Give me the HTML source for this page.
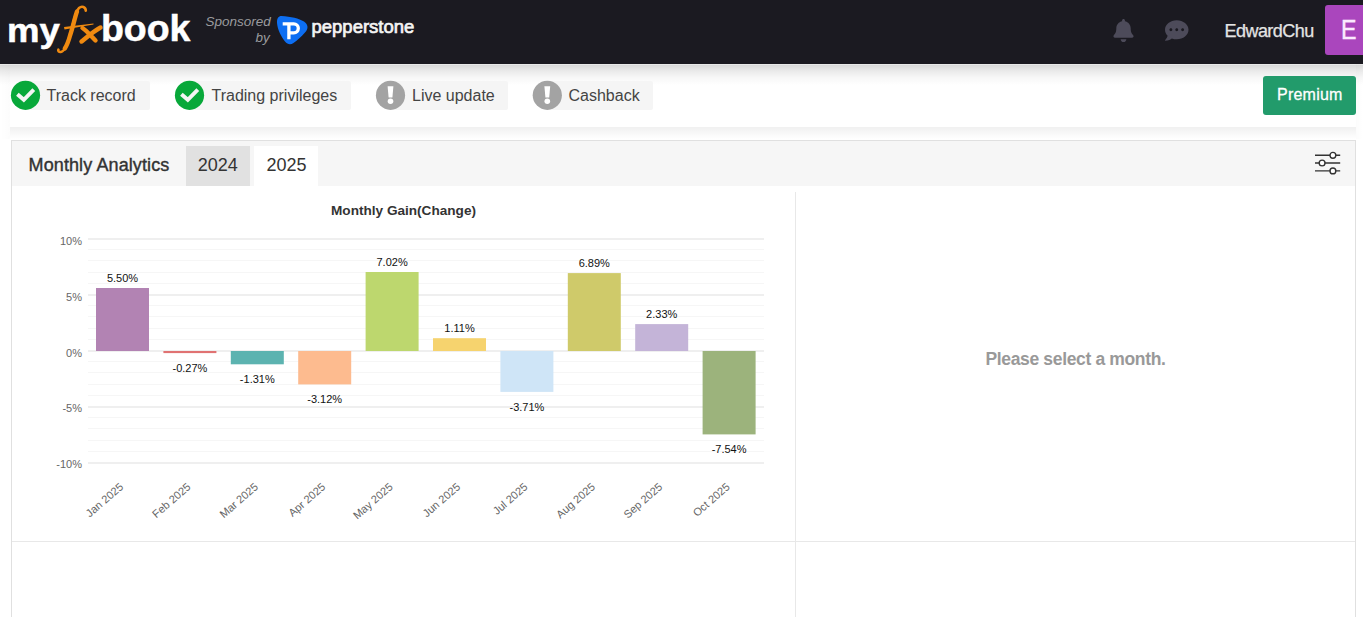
<!DOCTYPE html>
<html><head><meta charset="utf-8">
<style>
*{margin:0;padding:0;box-sizing:border-box}
html,body{width:1363px;height:617px;overflow:hidden;background:#fff;font-family:"Liberation Sans",sans-serif}
.a{position:absolute;white-space:nowrap;line-height:1}
#hdr{position:absolute;left:0;top:0;width:1363px;height:64px;background:#1b1a21}
#hshadow{position:absolute;left:0;top:64px;width:1363px;height:21px;background:linear-gradient(rgba(0,0,0,.05),rgba(0,0,0,.15) 6%,rgba(0,0,0,.08) 35%,rgba(0,0,0,.03) 65%,rgba(0,0,0,0))}
#card{position:absolute;left:10px;top:64px;width:1346px;height:63px;background:#fff}
#cshadow{position:absolute;left:10px;top:127px;width:1346px;height:12px;background:linear-gradient(rgba(0,0,0,.06),rgba(0,0,0,0))}
.chipbg{position:absolute;top:81px;height:29px;background:#f5f5f5;border-radius:2px}
.chiptxt{position:absolute;top:88.2px;font-size:16px;color:#444;line-height:1;white-space:nowrap}
#panel{position:absolute;left:11px;top:140px;width:1345px;height:500px;border:1px solid #e0e0e0;background:#fff}
#phead{position:absolute;left:12px;top:141px;width:1343px;height:45px;background:#f6f6f6}
</style></head><body>
<div id="hdr"></div>

<!-- logo -->
<div class="a" style="left:7.3px;top:13px;font-size:34px;font-weight:bold;color:#fff;transform:scaleX(1.075);transform-origin:0 0;-webkit-text-stroke:0.5px #fff">my</div>
<svg class="a" style="left:0;top:0" width="200" height="64">
  <path d="M85.8 10.6 C 85.6 6.8, 81.8 5.6, 79 8 C 75.6 11, 73.6 22, 70.2 34.5 C 67.8 43.5, 64.8 51.5, 60.8 52 C 58.8 52.2, 57.8 51, 58.4 49.6" stroke="#f08a10" stroke-width="2.6" fill="none" stroke-linecap="round"/>
  <path d="M77 11.5 C 75 17, 73.4 25, 70.2 35 C 68.7 40.5, 67.2 45, 64.8 48.5" stroke="#f08a10" stroke-width="4.4" fill="none" stroke-linecap="round"/>
  <path d="M64 27 L93.5 23.4 L93.5 24.4 L64.5 29.4 Z" fill="#f08a10"/>
  <path d="M82.5 28 C 87 31, 91 36, 95.5 40.5 M100.5 27.5 C 94 31, 87 37, 81.5 41.5" stroke="#f08a10" stroke-width="4.4" fill="none" stroke-linecap="round"/>
</svg>
<div class="a" style="left:100.8px;top:11.2px;font-size:36px;font-weight:bold;color:#fff;transform:scaleX(1.04);transform-origin:0 0;-webkit-text-stroke:0.5px #fff">book</div>

<div class="a" style="left:205.5px;top:14.8px;font-size:13.5px;font-style:italic;color:#9a9a9e">Sponsored</div>
<div class="a" style="left:255.5px;top:31px;font-size:13.5px;font-style:italic;color:#9a9a9e">by</div>
<svg class="a" style="left:0;top:0" width="1363" height="64">
  <path d="M281.5 16 C 291 16.5, 299 18.5, 304 21.5 C 308.5 24.5, 308.5 29, 305 32.5 C 301 37, 297 40.5, 293.5 43 C 290.5 45, 287.5 44.5, 285 41.5 C 281.5 37, 277.5 30, 277 23 C 276.7 18.5, 278.5 16, 281.5 16 Z" fill="#0d6ef2"/>
  <path d="M282.7 23.8 H293.8 a4.5 4.5 0 0 1 0 9 H288.9 M288.9 23.8 V39.3" stroke="#fff" stroke-width="3.3" fill="none"/>
</svg>
<div class="a" style="left:311.5px;top:18.2px;font-size:18.5px;color:#f4f4f4;-webkit-text-stroke:0.7px #f4f4f4">pepperstone</div>

<!-- right header -->
<svg class="a" style="left:1113px;top:19px" width="21" height="23" viewBox="0 0 448 512"><path fill="#4d4b5a" d="M224 512c35.32 0 63.97-28.65 63.97-64H160.03c0 35.35 28.65 64 63.97 64zm215.39-149.71c-19.32-20.76-55.47-51.99-55.470-154.29 0-77.7-54.48-139.9-127.94-155.16V32c0-17.67-14.32-32-31.98-32s-31.98 14.33-31.98 32v20.84C118.56 68.1 64.08 130.3 64.08 208c0 102.3-36.15 133.53-55.47 154.29-6 6.450-8.66 14.16-8.61 21.71.11 16.4 12.98 32 32.1 32h383.8c19.12 0 32-15.6 32.1-32 .05-7.55-2.61-15.27-8.61-21.71z"/></svg>
<svg class="a" style="left:1165px;top:19.5px" width="23.5" height="21" viewBox="0 32 512 448"><path fill="#4d4b5a" d="M256 32C114.6 32 0 125.1 0 240c0 49.6 21.4 95 57 130.7C44.5 421.1 2.7 466 2.2 466.5c-2.2 2.3-2.8 5.7-1.500 8.7S4.8 480 8 480c66.3 0 116-31.8 140.6-51.4 32.7 12.3 69 19.4 107.4 19.4 141.4 0 256-93.1 256-208S397.4 32 256 32zM128 272c-17.7 0-32-14.3-32-32s14.3-32 32-32 32 14.3 32 32-14.3 32-32 32zm128 0c-17.7 0-32-14.3-32-32s14.3-32 32-32 32 14.3 32 32-14.3 32-32 32zm128 0c-17.7 0-32-14.3-32-32s14.3-32 32-32 32 14.3 32 32-14.3 32-32 32z"/></svg>
<div class="a" style="left:1224.5px;top:21.5px;font-size:18px;color:#e4e4e4;letter-spacing:-0.54px;-webkit-text-stroke:0.25px #e4e4e4">EdwardChu</div>
<div class="a" style="left:1325px;top:5px;width:50px;height:50px;background:#aa46bd;border-radius:3px"></div>
<div class="a" style="left:1341.2px;top:16.6px;font-size:27px;color:#fbeaff;transform:scaleX(0.86);transform-origin:0 0;-webkit-text-stroke:0.4px #fbeaff">E</div>

<!-- status card -->
<div id="card"></div>
<div id="cshadow"></div>
<div class="a" style="left:0;top:64px;width:10px;height:75px;background:linear-gradient(to left,rgba(0,0,0,.012),rgba(0,0,0,0))"></div>
<div class="a" style="left:1356px;top:64px;width:7px;height:75px;background:linear-gradient(to right,rgba(0,0,0,.012),rgba(0,0,0,0))"></div>
<div id="hshadow"></div>

<div class="chipbg" style="left:25px;width:125px"></div>
<div class="chipbg" style="left:189px;width:162px"></div>
<div class="chipbg" style="left:390px;width:118px"></div>
<div class="chipbg" style="left:547px;width:106px"></div>

<svg class="a" style="left:0;top:0" width="700" height="130">
  <g fill="#08a83a"><circle cx="25.5" cy="95.3" r="14.6"/><circle cx="189.5" cy="95.3" r="14.6"/></g>
  <g stroke="#f4f4f4" stroke-width="3.9" fill="none" stroke-linejoin="miter">
    <path d="M17.4 94.2 L23.8 99.8 L33.8 89.6"/>
    <path d="M181.4 94.2 L187.8 99.8 L197.8 89.6"/>
  </g>
  <g fill="#a3a3a3"><circle cx="390.5" cy="95.3" r="14.6"/><circle cx="547.3" cy="95.3" r="14.6"/></g>
  <g fill="#fff">
    <path d="M387.6 86.2 H393.4 L392.4 97.4 H388.6 Z"/><circle cx="390.5" cy="101.2" r="2.8"/>
    <path d="M544.4 86.2 H550.2 L549.2 97.4 H545.4 Z"/><circle cx="547.3" cy="101.2" r="2.8"/>
  </g>
</svg>
<div class="chiptxt" style="left:46.5px">Track record</div>
<div class="chiptxt" style="left:211.5px">Trading privileges</div>
<div class="chiptxt" style="left:412px">Live update</div>
<div class="chiptxt" style="left:568.5px">Cashback</div>

<div class="a" style="left:1263px;top:76px;width:93px;height:39px;background:#229b6b;border-radius:3px"></div>
<div class="a" style="left:1277px;top:86.6px;font-size:16px;color:#fff;letter-spacing:0.24px;-webkit-text-stroke:0.3px #fff">Premium</div>

<!-- panel -->
<div id="panel"></div>
<div id="phead"></div>
<div class="a" style="left:28.6px;top:155.7px;font-size:18px;color:#333;letter-spacing:0.1px;-webkit-text-stroke:0.4px #333">Monthly Analytics</div>
<div class="a" style="left:186px;top:146px;width:64px;height:40px;background:#e1e1e1"></div>
<div class="a" style="left:254px;top:146px;width:64px;height:40px;background:#fff"></div>
<div class="a" style="left:197.8px;top:155.8px;font-size:18px;color:#333">2024</div>
<div class="a" style="left:266.4px;top:155.8px;font-size:18px;color:#333">2025</div>
<svg class="a" style="left:1305px;top:145px" width="45" height="37">
  <g stroke="#333" stroke-width="1.4" fill="none">
    <path d="M10 10.3 H25 M30.8 10.3 H35.2"/>
    <path d="M10 18 H14.2 M20 18 H35.2"/>
    <path d="M10 25.9 H25 M30.8 25.9 H35.2"/>
  </g>
  <g stroke="#333" stroke-width="1.4" fill="#fff">
    <circle cx="27.9" cy="10.3" r="2.9"/>
    <circle cx="17.1" cy="18" r="2.9"/>
    <circle cx="27.9" cy="25.9" r="2.9"/>
  </g>
</svg>

<!-- grid borders -->
<div class="a" style="left:795px;top:192px;width:1px;height:430px;background:#e8e8e8"></div>
<div class="a" style="left:12px;top:541px;width:1343px;height:1px;background:#e8e8e8"></div>

<div class="a" style="left:796px;top:350.8px;width:559px;text-align:center;font-size:17.5px;font-weight:bold;color:#999;letter-spacing:-0.35px">Please select a month.</div>

<!-- chart -->
<svg class="a" id="chart" style="left:0;top:0" width="800" height="617" font-family="Liberation Sans">
<rect x="88" y="462" width="676" height="2" fill="#efefef"/>
<rect x="88" y="451" width="676" height="1" fill="#f6f6f6"/>
<rect x="88" y="440" width="676" height="1" fill="#f6f6f6"/>
<rect x="88" y="428" width="676" height="1" fill="#f6f6f6"/>
<rect x="88" y="417" width="676" height="1" fill="#f6f6f6"/>
<rect x="88" y="406" width="676" height="2" fill="#efefef"/>
<rect x="88" y="395" width="676" height="1" fill="#f6f6f6"/>
<rect x="88" y="384" width="676" height="1" fill="#f6f6f6"/>
<rect x="88" y="372" width="676" height="1" fill="#f6f6f6"/>
<rect x="88" y="361" width="676" height="1" fill="#f6f6f6"/>
<rect x="88" y="350" width="676" height="2" fill="#efefef"/>
<rect x="88" y="339" width="676" height="1" fill="#f6f6f6"/>
<rect x="88" y="328" width="676" height="1" fill="#f6f6f6"/>
<rect x="88" y="316" width="676" height="1" fill="#f6f6f6"/>
<rect x="88" y="305" width="676" height="1" fill="#f6f6f6"/>
<rect x="88" y="294" width="676" height="2" fill="#efefef"/>
<rect x="88" y="283" width="676" height="1" fill="#f6f6f6"/>
<rect x="88" y="272" width="676" height="1" fill="#f6f6f6"/>
<rect x="88" y="260" width="676" height="1" fill="#f6f6f6"/>
<rect x="88" y="249" width="676" height="1" fill="#f6f6f6"/>
<rect x="88" y="238" width="676" height="2" fill="#efefef"/>
<text x="82" y="245.0" text-anchor="end" font-size="11" fill="#666">10%</text>
<text x="82" y="300.8" text-anchor="end" font-size="11" fill="#666">5%</text>
<text x="82" y="356.5" text-anchor="end" font-size="11" fill="#666">0%</text>
<text x="82" y="412.2" text-anchor="end" font-size="11" fill="#666">-5%</text>
<text x="82" y="468.0" text-anchor="end" font-size="11" fill="#666">-10%</text>
<rect x="96.0" y="288.0" width="53" height="63.0" fill="#b283b3"/>
<text x="122.5" y="281.5" text-anchor="middle" font-size="11" fill="#111">5.50%</text>
<text x="124.0" y="488" text-anchor="end" font-size="11" fill="#666" transform="rotate(-41 124.0 488)">Jan 2025</text>
<rect x="163.4" y="351.0" width="53" height="2.1" fill="#e07272"/>
<text x="189.9" y="371.7" text-anchor="middle" font-size="11" fill="#111">-0.27%</text>
<text x="191.4" y="488" text-anchor="end" font-size="11" fill="#666" transform="rotate(-41 191.4 488)">Feb 2025</text>
<rect x="230.8" y="351.0" width="53" height="13.3" fill="#5cb3b0"/>
<text x="257.3" y="382.9" text-anchor="middle" font-size="11" fill="#111">-1.31%</text>
<text x="258.8" y="488" text-anchor="end" font-size="11" fill="#666" transform="rotate(-41 258.8 488)">Mar 2025</text>
<rect x="298.2" y="351.0" width="53" height="33.4" fill="#fdbb8f"/>
<text x="324.7" y="403.0" text-anchor="middle" font-size="11" fill="#111">-3.12%</text>
<text x="326.2" y="488" text-anchor="end" font-size="11" fill="#666" transform="rotate(-41 326.2 488)">Apr 2025</text>
<rect x="365.6" y="272.0" width="53" height="79.0" fill="#bdd76e"/>
<text x="392.1" y="265.5" text-anchor="middle" font-size="11" fill="#111">7.02%</text>
<text x="393.6" y="488" text-anchor="end" font-size="11" fill="#666" transform="rotate(-41 393.6 488)">May 2025</text>
<rect x="433.0" y="338.2" width="53" height="12.8" fill="#f6d36e"/>
<text x="459.5" y="331.7" text-anchor="middle" font-size="11" fill="#111">1.11%</text>
<text x="461.0" y="488" text-anchor="end" font-size="11" fill="#666" transform="rotate(-41 461.0 488)">Jun 2025</text>
<rect x="500.4" y="351.0" width="53" height="40.9" fill="#cfe5f7"/>
<text x="526.9" y="410.5" text-anchor="middle" font-size="11" fill="#111">-3.71%</text>
<text x="528.4" y="488" text-anchor="end" font-size="11" fill="#666" transform="rotate(-41 528.4 488)">Jul 2025</text>
<rect x="567.8" y="273.1" width="53" height="77.9" fill="#cfca6a"/>
<text x="594.3" y="266.6" text-anchor="middle" font-size="11" fill="#111">6.89%</text>
<text x="595.8" y="488" text-anchor="end" font-size="11" fill="#666" transform="rotate(-41 595.8 488)">Aug 2025</text>
<rect x="635.2" y="324.1" width="53" height="26.9" fill="#c4b4d8"/>
<text x="661.7" y="317.6" text-anchor="middle" font-size="11" fill="#111">2.33%</text>
<text x="663.2" y="488" text-anchor="end" font-size="11" fill="#666" transform="rotate(-41 663.2 488)">Sep 2025</text>
<rect x="702.6" y="351.0" width="53" height="83.4" fill="#9cb37c"/>
<text x="729.1" y="453.0" text-anchor="middle" font-size="11" fill="#111">-7.54%</text>
<text x="730.6" y="488" text-anchor="end" font-size="11" fill="#666" transform="rotate(-41 730.6 488)">Oct 2025</text>
<text x="403.5" y="215" text-anchor="middle" font-size="13.6" font-weight="bold" fill="#333">Monthly Gain(Change)</text>
</svg>
</body></html>
